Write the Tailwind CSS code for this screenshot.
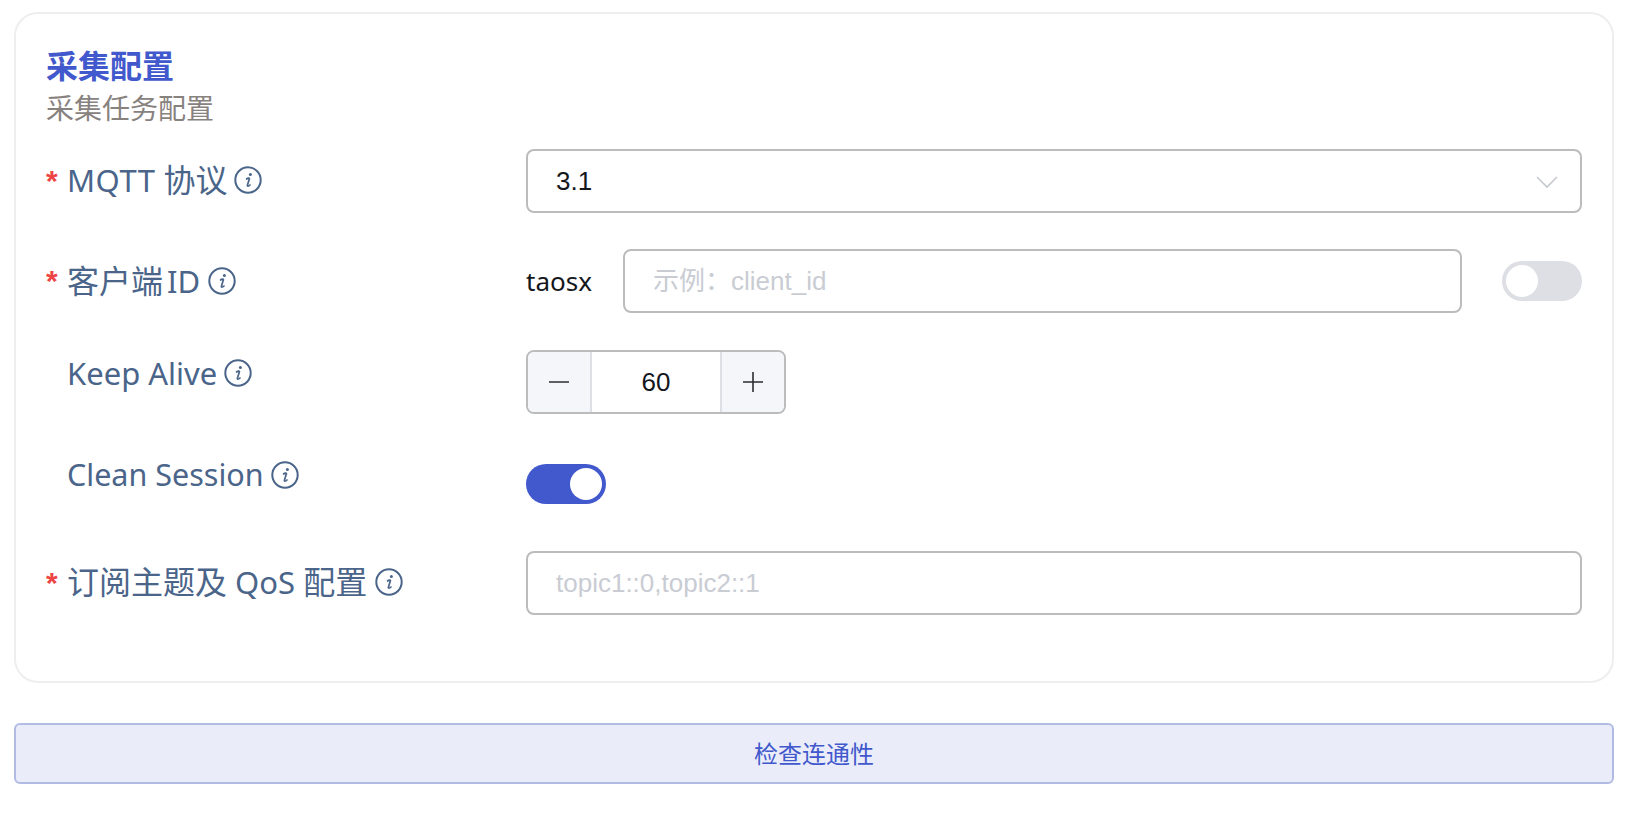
<!DOCTYPE html>
<html lang="zh-CN">

<head>
    <meta charset="UTF-8">
    <title>采集配置</title>
    <script src="https://cdn.jsdelivr.net/npm/@tailwindcss/browser@4"></script>
</head>

<body class="bg-white h-[824px] overflow-hidden font-['Noto_Sans','Noto_Sans_CJK_SC',sans-serif]">
    <div class="pl-[14px] pr-[20px] pt-[12px]">
        <!-- 采集配置 -->
        <div class="border-2 border-[#eeeeee] rounded-[24px] h-[671px] px-[30px] pt-[30px]">
            <h2 class="text-[32px] leading-[44px] font-semibold text-[#4159cc]">采集配置</h2>
            <p class="text-[28px] leading-[40px] text-[#88827f]">采集任务配置</p>

            <div class="mt-[21px] flex items-start h-[64px]">
                <div class="w-[480px] flex items-center h-[62px] text-[31px] text-[#4a6589]">
                    <span class="w-[21px] text-[30px] font-bold text-[#ee4444] font-['Liberation_Sans']">*</span>
                    <span><span class="tracking-[0.5px]">MQTT</span> <span class="text-[32px]">协议</span></span>
                    <svg class="ml-[6px] w-[28px] h-[28px]" viewBox="0 0 28 28" fill="none" stroke="currentColor"><circle cx="14" cy="14" r="12.7" stroke-width="2"/><circle cx="16.4" cy="8.4" r="1.5" fill="currentColor" stroke="none"/><path d="M12.6 13c1-.9 3-1.400 2.800-.2l-2 6.400c-.3 1.200 1 1.300 2.600-.2" stroke-width="1.700" stroke-linecap="round" stroke-linejoin="round"/></svg>
                </div>
                <div class="flex-1 h-[64px] border-2 border-[#bcbcbc] rounded-[8px] pl-[28px] pr-[22px] pt-[1px] flex items-center justify-between text-[26px] text-[#14171c] font-['Liberation_Sans']">
                    <span>3.1</span>
                    <svg class="w-[22px] h-[14px]" viewBox="0 0 22 14" fill="none" stroke="#c6c9d0" stroke-width="1.6"><path d="M1 2l10 10L21 2"/></svg>
                </div>
            </div>

            <div class="mt-[36px] flex items-start h-[64px]">
                <div class="w-[480px] flex items-center h-[63px] text-[31px] text-[#4a6589]">
                    <span class="w-[21px] text-[30px] font-bold text-[#ee4444] font-['Liberation_Sans']">*</span>
                    <span><span class="text-[32px]">客户端</span><span class="ml-[4px]">ID</span></span>
                    <svg class="ml-[8px] w-[28px] h-[28px]" viewBox="0 0 28 28" fill="none" stroke="currentColor"><circle cx="14" cy="14" r="12.7" stroke-width="2"/><circle cx="16.4" cy="8.4" r="1.5" fill="currentColor" stroke="none"/><path d="M12.6 13c1-.9 3-1.400 2.800-.2l-2 6.400c-.3 1.200 1 1.300 2.600-.2" stroke-width="1.700" stroke-linecap="round" stroke-linejoin="round"/></svg>
                </div>
                <span class="w-[97px] h-[64px] flex items-center text-[26px] text-[#14171c]">taosx</span>
                <div class="flex-1 h-[64px] border-2 border-[#bcbcbc] rounded-[8px] pl-[28px] flex items-center text-[26px] text-[#c9ccd3] font-['Liberation_Sans','Noto_Sans_CJK_SC',sans-serif]">示例：client_id</div>
                <div class="ml-[40px] mt-[12px] w-[80px] h-[40px] rounded-full bg-[#dddfe5] p-[4px] flex">
                    <span class="w-[32px] h-[32px] rounded-full bg-white"></span>
                </div>
            </div>

            <div class="mt-[37px] flex items-start h-[64px]">
                <div class="w-[480px] flex items-center h-[46px] text-[31px] text-[#4a6589] pl-[21px]">
                    <span>Keep Alive</span>
                    <svg class="ml-[7px] w-[28px] h-[28px]" viewBox="0 0 28 28" fill="none" stroke="currentColor"><circle cx="14" cy="14" r="12.7" stroke-width="2"/><circle cx="16.4" cy="8.4" r="1.5" fill="currentColor" stroke="none"/><path d="M12.6 13c1-.9 3-1.400 2.800-.2l-2 6.400c-.3 1.200 1 1.300 2.600-.2" stroke-width="1.700" stroke-linecap="round" stroke-linejoin="round"/></svg>
                </div>
                <div class="w-[260px] h-[64px] border-2 border-[#bcbcbc] rounded-[8px] flex overflow-hidden text-[26px] text-[#14171c] font-['Liberation_Sans']">
                    <span class="w-[64px] bg-[#f5f6fa] border-r-2 border-[#dddfe6] flex items-center justify-center">
                        <svg class="w-[20px] h-[20px]" viewBox="0 0 20 20" stroke="#2a2d33" stroke-width="1.6"><path d="M0 10h20"/></svg>
                    </span>
                    <span class="flex-1 flex items-center justify-center">60</span>
                    <span class="w-[64px] bg-[#f5f6fa] border-l-2 border-[#dddfe6] flex items-center justify-center">
                        <svg class="w-[20px] h-[20px]" viewBox="0 0 20 20" stroke="#2a2d33" stroke-width="1.6"><path d="M0 10h20M10 0v20"/></svg>
                    </span>
                </div>
            </div>

            <div class="mt-[37px] flex items-start h-[64px]">
                <div class="w-[480px] flex items-center h-[47px] text-[30.5px] text-[#4a6589] pl-[21px]">
                    <span>Clean Session</span>
                    <svg class="ml-[7px] w-[28px] h-[28px]" viewBox="0 0 28 28" fill="none" stroke="currentColor"><circle cx="14" cy="14" r="12.7" stroke-width="2"/><circle cx="16.4" cy="8.4" r="1.5" fill="currentColor" stroke="none"/><path d="M12.6 13c1-.9 3-1.400 2.800-.2l-2 6.400c-.3 1.200 1 1.300 2.600-.2" stroke-width="1.700" stroke-linecap="round" stroke-linejoin="round"/></svg>
                </div>
                <div class="mt-[13px] w-[80px] h-[40px] rounded-full bg-[#4159cc] p-[4px] flex justify-end">
                    <span class="w-[32px] h-[32px] rounded-full bg-white"></span>
                </div>
            </div>

            <div class="mt-[36px] flex items-start h-[64px]">
                <div class="w-[480px] flex items-center h-[62px] text-[31px] text-[#4a6589]">
                    <span class="w-[21px] text-[30px] font-bold text-[#ee4444] font-['Liberation_Sans']">*</span>
                    <span><span class="text-[32px]">订阅主题及</span> QoS <span class="text-[32px]">配置</span></span>
                    <svg class="ml-[8px] w-[28px] h-[28px]" viewBox="0 0 28 28" fill="none" stroke="currentColor"><circle cx="14" cy="14" r="12.7" stroke-width="2"/><circle cx="16.4" cy="8.4" r="1.5" fill="currentColor" stroke="none"/><path d="M12.6 13c1-.9 3-1.400 2.800-.2l-2 6.400c-.3 1.200 1 1.300 2.600-.2" stroke-width="1.700" stroke-linecap="round" stroke-linejoin="round"/></svg>
                </div>
                <div class="flex-1 h-[64px] border-2 border-[#bcbcbc] rounded-[8px] pl-[28px] flex items-center text-[26px] text-[#c9ccd3] font-['Liberation_Sans']">topic1::0,topic2::1</div>
            </div>
        </div>

        <!-- 检查连通性 -->
        <button class="mt-[40px] w-full h-[61px] bg-[#eaedf9] border-2 border-[#b1bbe4] rounded-[6px] text-[24px] text-[#4159cc]">检查连通性</button>
    </div>
</body>

</html>
